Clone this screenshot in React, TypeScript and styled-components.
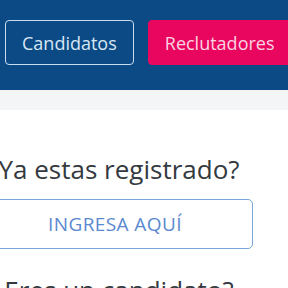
import React from "react";
import styled, { createGlobalStyle } from "styled-components";

const GlobalStyle = createGlobalStyle`
  html, body {
    margin: 0;
    padding: 0;
    background: #ffffff;
    font-family: "Open Sans", "Noto Sans", sans-serif;
    overflow: hidden;
  }
`;

const Header = styled.header`
  height: 90px;
  box-sizing: border-box;
  padding: 20px 0 0 5px;

  display: flex;
  gap: 14px;

  background-color: #0b4a84;
  white-space: nowrap;
`;

const NavButton = styled.button<{ $filled?: boolean }>`
  height: 45px;
  box-sizing: border-box;
  padding: 0 16px;
  flex-shrink: 0;

  font-family: inherit;
  font-size: 18px;
  color: ${({ $filled }) => ($filled ? "#fcd3e2" : "#d8e7f6")};

  background-color: ${({ $filled }) => ($filled ? "#e9065f" : "transparent")};
  border: 1px solid ${({ $filled }) => ($filled ? "#e9065f" : "#c9dcef")};
  border-radius: 4px;
`;

const Band = styled.div`
  height: 20px;
  background-color: #f4f5f7;
`;

const Content = styled.main`
  width: 276px;
  margin-left: -23px;
  padding-top: 43px;

  display: flex;
  flex-direction: column;
  align-items: center;
`;

const Question = styled.h2`
  margin: 0 0 0 8px;

  font-size: 26px;
  font-weight: 400;
  line-height: 32px;
  color: #343a40;
  white-space: nowrap;
`;

const OutlineButton = styled.button`
  width: 100%;
  height: 50px;
  margin: 14px 0 25px;

  font-family: inherit;
  font-size: 19px;
  letter-spacing: 0.4px;
  color: #5a89cf;

  background: #ffffff;
  border: 1px solid #78a4d6;
  border-radius: 5px;
`;

export default function App() {
  return (
    <>
      <GlobalStyle />
      <Header>
        <NavButton>Candidatos</NavButton>
        <NavButton $filled>Reclutadores</NavButton>
      </Header>
      <Band />
      <Content>
        <Question>Ya estas registrado?</Question>
        <OutlineButton>INGRESA AQUÍ</OutlineButton>
        <Question>Eres un candidato?</Question>
      </Content>
    </>
  );
}
